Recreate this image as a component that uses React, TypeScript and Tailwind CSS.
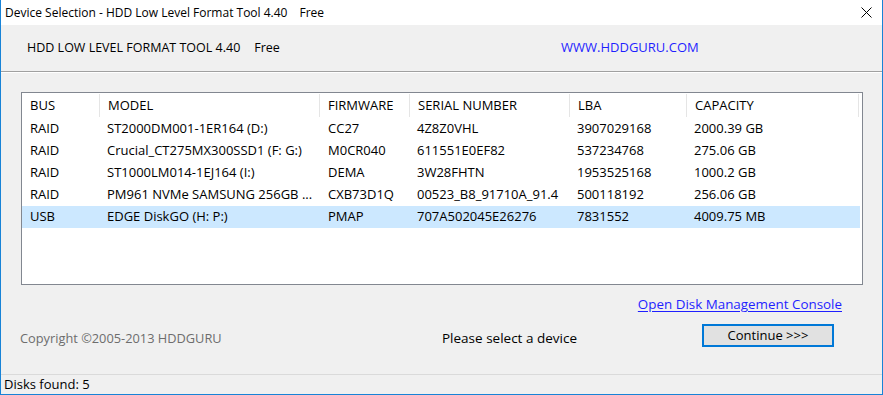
import React from "react";

type Disk = {
  bus: string;
  model: string;
  firmware: string;
  serial: string;
  lba: string;
  capacity: string;
};

const disks: Disk[] = [
  { bus: "RAID", model: "ST2000DM001-1ER164 (D:)", firmware: "CC27", serial: "4Z8Z0VHL", lba: "3907029168", capacity: "2000.39 GB" },
  { bus: "RAID", model: "Crucial_CT275MX300SSD1 (F: G:)", firmware: "M0CR040", serial: "611551E0EF82", lba: "537234768", capacity: "275.06 GB" },
  { bus: "RAID", model: "ST1000LM014-1EJ164 (I:)", firmware: "DEMA", serial: "3W28FHTN", lba: "1953525168", capacity: "1000.2 GB" },
  { bus: "RAID", model: "PM961 NVMe SAMSUNG 256GB ...", firmware: "CXB73D1Q", serial: "00523_B8_91710A_91.4", lba: "500118192", capacity: "256.06 GB" },
  { bus: "USB", model: "EDGE DiskGO (H: P:)", firmware: "PMAP", serial: "707A502045E26276", lba: "7831552", capacity: "4009.75 MB" },
];

const columns = [
  { title: "BUS", w: "w-[78px]" },
  { title: "MODEL", w: "w-[220px]" },
  { title: "FIRMWARE", w: "w-[90px]" },
  { title: "SERIAL NUMBER", w: "w-[160px]" },
  { title: "LBA", w: "w-[117px]" },
  { title: "CAPACITY", w: "w-[172px]" },
];

const App: React.FC = () => {
  return (
    <div className="w-[883px] h-[395px] flex flex-col bg-[#f0f0f0] border-x border-b border-[#1883d7] font-['Open_Sans',sans-serif] text-[13px] text-black overflow-hidden">
      {/* title bar */}
      <div className="h-[25px] shrink-0 bg-white flex items-center pl-[4px] pr-[10px] text-[12px]">
        <span>Device Selection - HDD Low Level Format Tool 4.40</span>
        <span className="ml-[12px]">Free</span>
        <svg className="ml-auto" width="11" height="11" viewBox="0 0 11 11">
          <path d="M0.5 0.5L10.5 10.5M10.5 0.5L0.5 10.5" stroke="#000" strokeWidth="1" />
        </svg>
      </div>

      {/* header */}
      <div className="h-[47px] shrink-0 flex items-center pl-[26px] border-b border-[#a0a0a0] shadow-[0_1px_0_#ffffff]">
        <span className="w-[534px] flex text-[12.5px]">
          <span>HDD LOW LEVEL FORMAT TOOL 4.40</span>
          <span className="ml-[14px]">Free</span>
        </span>
        <span className="text-[#1f1fff]">WWW.HDDGURU.COM</span>
      </div>

      {/* device list */}
      <div className="ml-[20px] mt-[20px] w-[842px] h-[193px] shrink-0 bg-white border border-[#828790]">
        <div className="h-[25px] flex">
          {columns.map((c) => (
            <div key={c.title} className={`${c.w} flex items-center pl-[8px] border-r border-[#e5e5e5] my-[1px]`}>
              {c.title}
            </div>
          ))}
        </div>
        {disks.map((d, i) => (
          <div key={i} className={`h-[22px] flex items-center w-[838px] ${i === 4 ? "bg-[#cce8ff]" : ""}`}>
            <div className="w-[78px] pl-[8px]">{d.bus}</div>
            <div className="w-[220px] pl-[7px]">{d.model}</div>
            <div className="w-[90px] pl-[8px]">{d.firmware}</div>
            <div className="w-[160px] pl-[7px]">{d.serial}</div>
            <div className="w-[117px] pl-[7px]">{d.lba}</div>
            <div className="w-[172px] pl-[7px]">{d.capacity}</div>
          </div>
        ))}
      </div>

      {/* link row */}
      <div className="mt-[10px] h-[18px] shrink-0 flex justify-end pr-[40px] leading-[18px]">
        <span className="text-[13.4px] text-[#1f1fff] underline underline-offset-2">Open Disk Management Console</span>
      </div>

      {/* bottom row */}
      <div className="flex items-start pl-[19px] flex-1">
        <span className="w-[422px] mt-[16px] leading-[18px] text-[12.8px] text-[#6d6d6d]">Copyright ©2005-2013 HDDGURU</span>
        <span className="w-[260px] mt-[16px] leading-[18px] text-[13.5px]">Please select a device</span>
        <button className="mt-[11px] w-[132px] h-[23px] bg-[#e1e1e1] border-2 border-[#0078d7] flex items-center justify-center leading-none">
          Continue &gt;&gt;&gt;
        </button>
      </div>

      {/* status bar */}
      <div className="h-[20px] shrink-0 border-t border-[#dadada] flex items-center pl-[3px]">
        Disks found: 5
      </div>
    </div>
  );
};

export default App;
